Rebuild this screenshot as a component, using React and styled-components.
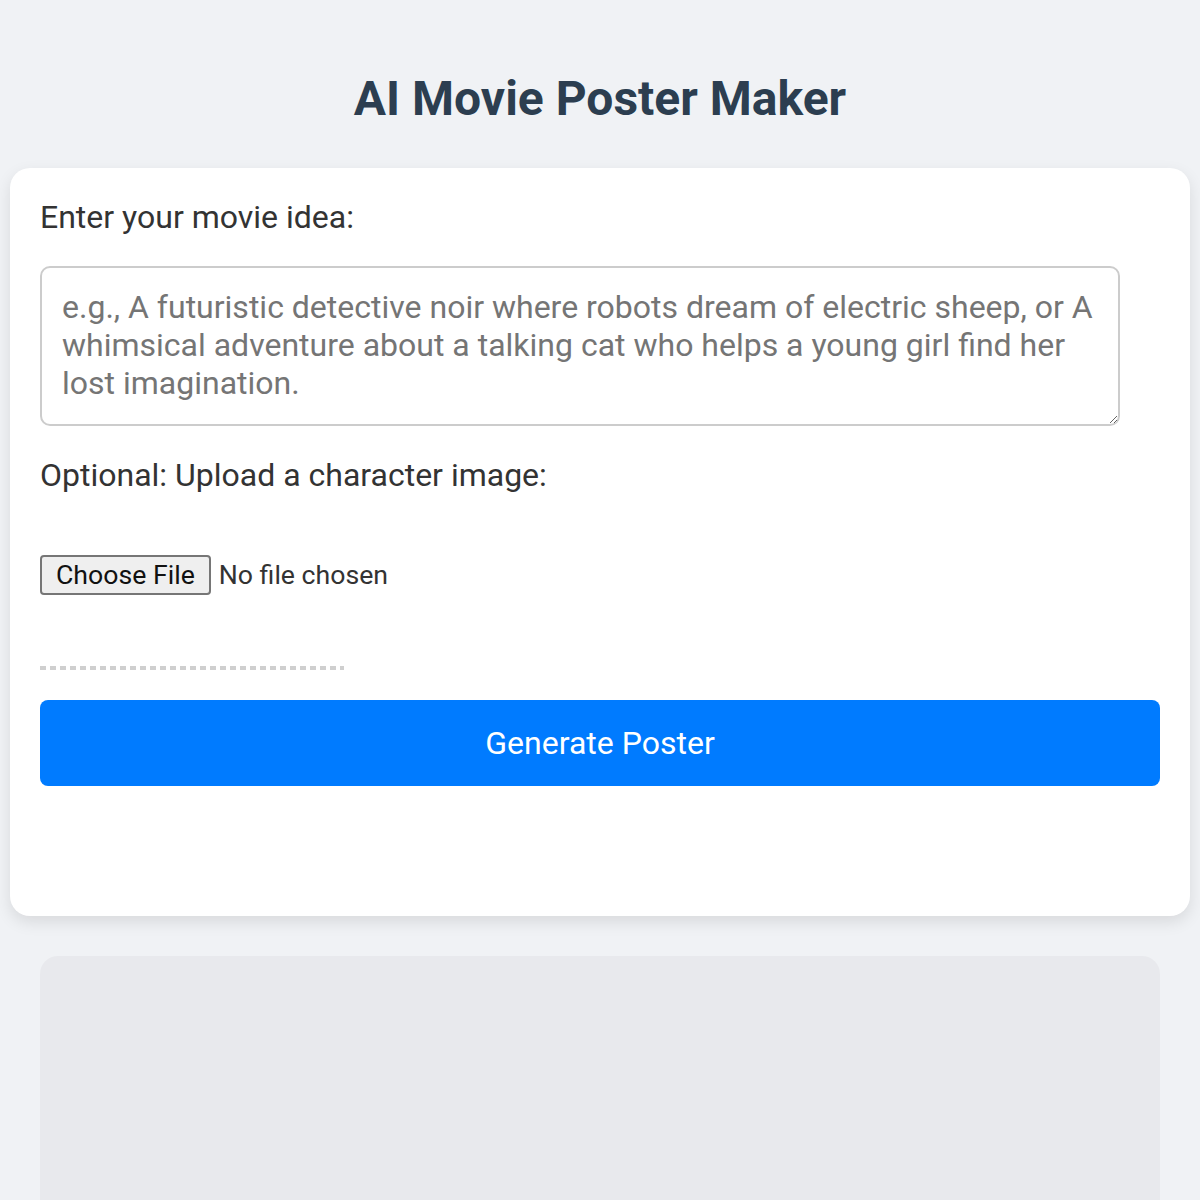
import React, { useState } from 'react';
import styled, { createGlobalStyle } from 'styled-components';

const GlobalStyle = createGlobalStyle`
  html, body {
    margin: 0;
    padding: 0;
    background: #f0f2f5;
    font-family: Roboto, "Liberation Sans", sans-serif;
  }
  * {
    box-sizing: border-box;
  }
`;

const Page = styled.div`
  display: flex;
  flex-direction: column;
  padding: 0 10px;
  min-height: 1200px;
`;

const Title = styled.h1`
  margin: 70px 0 40px;
  text-align: center;
  color: #2c3e50;
  font-size: 48px;
  font-weight: 700;
  line-height: 58px;
`;

const Card = styled.div`
  display: flex;
  flex-direction: column;
  background: #fff;
  border-radius: 20px;
  box-shadow: 0 6px 16px rgba(0, 0, 0, 0.1);
  padding: 30px 30px 130px;
`;

const Label = styled.label`
  display: block;
  color: #333;
  font-size: 32px;
  line-height: 38px;
  margin: 0 0 ${props => (props.$tight ? '0' : '30px')};
`;

const IdeaInput = styled.textarea`
  width: 1080px;
  height: 160px;
  padding: 20px 20px;
  border: 2px solid #ccc;
  border-radius: 10px;
  font-family: Roboto, "Liberation Sans", sans-serif;
  font-size: 32px;
  line-height: 38px;
  color: #333;
  resize: vertical;
  margin-bottom: 30px;

  &::placeholder {
    color: #757575;
  }
`;

const FileRow = styled.div`
  margin-top: 61px;
  height: 40px;
  display: flex;
  align-items: center;
`;

const FileInput = styled.input`
  font-family: Roboto, "Liberation Sans", sans-serif;
  font-size: 26.67px;
  color: #333;

  &::file-selector-button {
    font-family: Roboto, "Liberation Sans", sans-serif;
    font-size: 26.67px;
    color: #111;
    background: #efefef;
    border: 2px solid #767676;
    border-radius: 4px;
    padding: 2px 14px;
    margin-right: 8px;
  }
`;

const Progress = styled.div`
  margin-top: 71px;
  width: 304px;
  height: 4px;
  background: repeating-linear-gradient(
    to right,
    #cfcfcf 0,
    #cfcfcf 6px,
    transparent 6px,
    transparent 10px
  );
`;

const GenerateButton = styled.button`
  margin-top: 30px;
  height: 86px;
  width: 100%;
  border: none;
  border-radius: 8px;
  background: #007bff;
  color: #fff;
  font-family: Roboto, "Liberation Sans", sans-serif;
  font-size: 32px;
  cursor: pointer;
`;

const Result = styled.div`
  margin: 40px 30px 0;
  height: 400px;
  background: #e8e9ed;
  border-radius: 18px;
`;

export default function App() {
  const [idea, setIdea] = useState('');

  return (
    <Page>
      <GlobalStyle />
      <Title>AI Movie Poster Maker</Title>
      <Card>
        <Label htmlFor="idea">Enter your movie idea:</Label>
        <IdeaInput
          id="idea"
          value={idea}
          onChange={(e) => setIdea(e.target.value)}
          placeholder="e.g., A futuristic detective noir where robots dream of electric sheep, or A whimsical adventure about a talking cat who helps a young girl find her lost imagination."
        />
        <Label htmlFor="char" $tight>Optional: Upload a character image:</Label>
        <FileRow>
          <FileInput id="char" type="file" accept="image/*" />
        </FileRow>
        <Progress />
        <GenerateButton>Generate Poster</GenerateButton>
      </Card>
      <Result />
    </Page>
  );
}
